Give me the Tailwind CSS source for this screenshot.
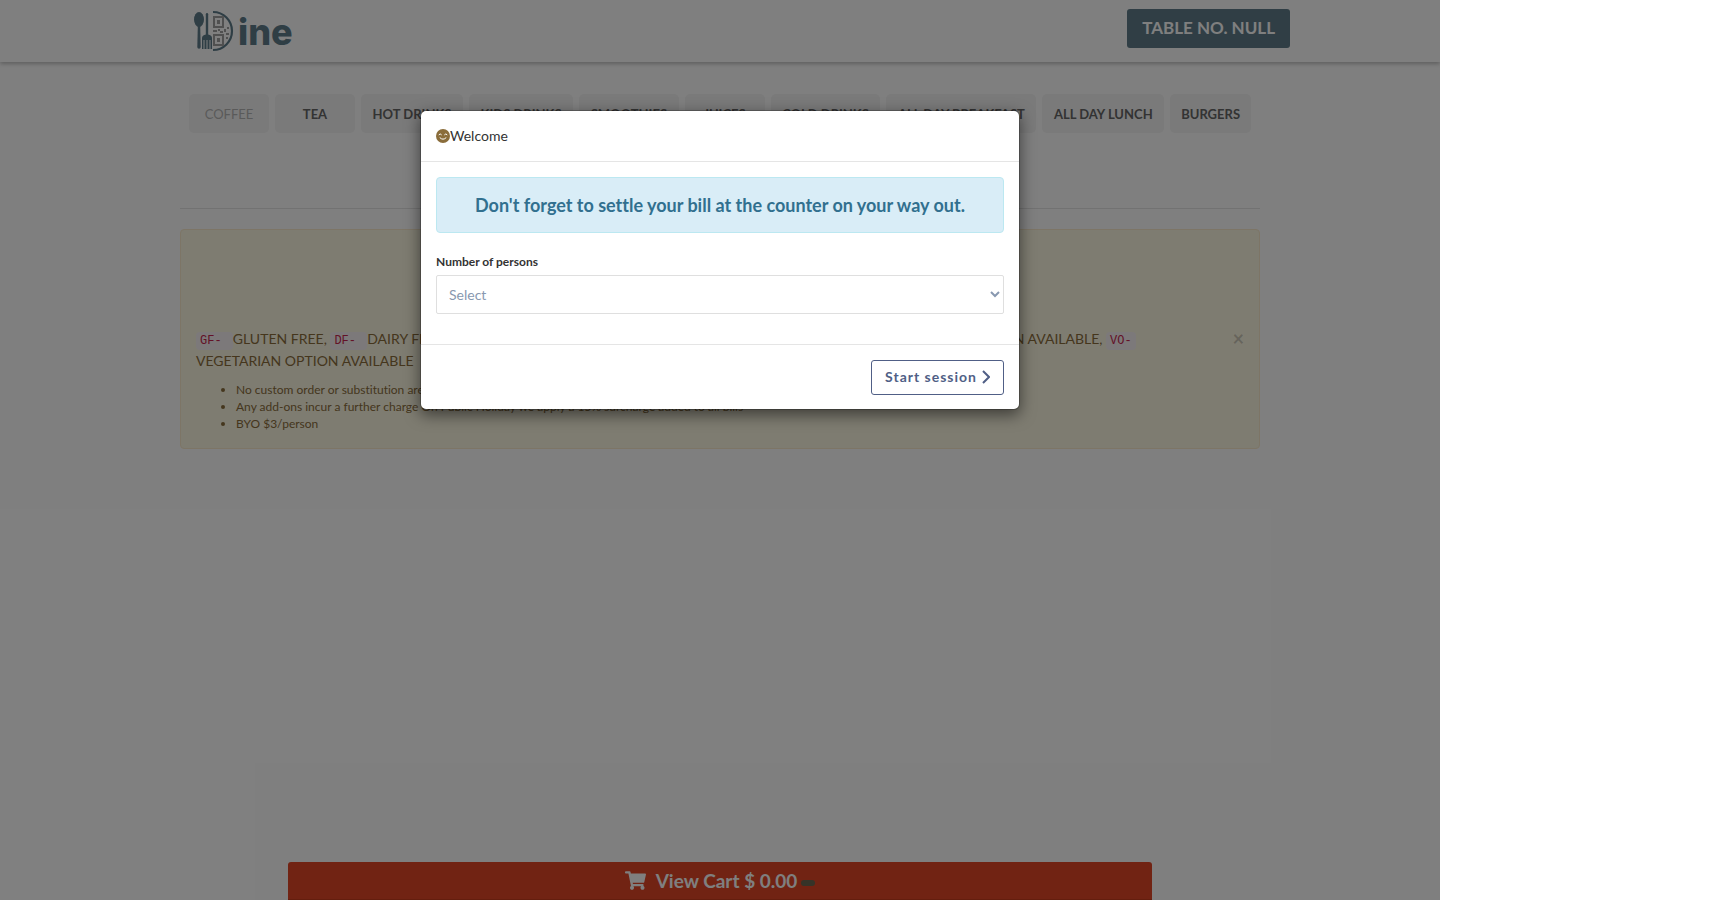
<!DOCTYPE html>
<html lang="en">
<head>
<meta charset="utf-8">
<title>Dine</title>
<script src="https://cdn.jsdelivr.net/npm/@tailwindcss/browser@4"></script>
</head>
<body class="bg-white font-['Lato',sans-serif] text-sm text-[#333] [font-variant-ligatures:none]">
<div class="relative flex min-h-screen w-full max-w-[1440px] flex-col overflow-hidden bg-white">

  <header class="h-[62px] w-full shadow-[0_2px_4px_rgba(0,0,0,0.25)]">
    <div class="mx-auto flex w-4/5 items-start justify-between pr-[6px] pl-[46px]">
      <a href="#" aria-label="Dine" class="mt-2">
        <svg width="106" height="46" viewBox="0 0 106 46" fill="#5f7d8b">
          <ellipse cx="9" cy="11.500" rx="5" ry="7.500"/>
          <path d="M7.800 18h2.400l.5 21a1.700 1.700 0 0 1-3.400 0z"/>
          <path d="M15.800 6.300a1.200 1.200 0 0 1 2.400 0V28h-2.400z"/>
          <path d="M12 41V30q0-3 4-3.500h2q4 .5 4 3.500v11h-1.500V32h-1v9h-2v-9h-1v9h-2v-9h-1v9z"/>
          <path d="M23 4A19 19 0 0 1 23 42" fill="none" stroke="#5f7d8b" stroke-width="2.200"/>
          <g fill="#a0a0a0">
            <path d="M23 8h11v12H23zm2 2v8h7v-8zM27 12h3v4h-3z" fill-rule="evenodd"/>
            <path d="M23 26h11v12H23zm2 2v8h7v-8zM27 30h3v4h-3z" fill-rule="evenodd"/>
            <path d="M23 22h4v2h-4zM28 21h2v2h-2zM30 23h3v2h-3zM34 21h2v3h-2zM37 19h2v2h-2zM36 25h3v2h-3zM36 29h2v2h-2z"/>
          </g>
          <text x="48" y="37" font-family="Inter" font-weight="800" font-size="36">ine</text>
        </svg>
      </a>
      <button class="mt-[9px] h-[39px] rounded-[3px] bg-[#607d8b] px-[15px] pb-[3px] text-[17px] leading-none font-bold text-white">TABLE NO. NULL</button>
    </div>
  </header>

  <main class="mx-auto w-3/4">
    <nav class="flex gap-[6px] pt-8 pr-[9px] pl-[9px] text-[13px] font-bold text-[#666]">
      <button class="h-[39px] min-w-20 rounded-[5px] bg-[#f4f4f4] px-[10px] pt-[2px] font-normal text-[#b4b4b4]">COFFEE</button>
      <button class="h-[39px] min-w-20 rounded-[5px] bg-[#f4f4f4] px-[10px] pt-[2px]">TEA</button>
      <button class="h-[39px] min-w-20 grow rounded-[5px] bg-[#f4f4f4] px-[10px] pt-[2px] whitespace-nowrap">HOT DRINKS</button>
      <button class="h-[39px] min-w-20 grow rounded-[5px] bg-[#f4f4f4] px-[10px] pt-[2px] whitespace-nowrap">KIDS DRINKS</button>
      <button class="h-[39px] min-w-20 grow rounded-[5px] bg-[#f4f4f4] px-[10px] pt-[2px]">SMOOTHIES</button>
      <button class="h-[39px] min-w-20 rounded-[5px] bg-[#f4f4f4] px-[10px] pt-[2px]">JUICES</button>
      <button class="h-[39px] min-w-20 grow rounded-[5px] bg-[#f4f4f4] px-[10px] pt-[2px] whitespace-nowrap">COLD DRINKS</button>
      <button class="h-[39px] min-w-20 grow rounded-[5px] bg-[#f4f4f4] px-[10px] pt-[2px] whitespace-nowrap">ALL DAY BREAKFAST</button>
      <button class="h-[39px] min-w-20 grow rounded-[5px] bg-[#f4f4f4] px-[10px] pt-[2px] whitespace-nowrap">ALL DAY LUNCH</button>
      <button class="h-[39px] min-w-20 rounded-[5px] bg-[#f4f4f4] px-[11px] pt-[2px]">BURGERS</button>
    </nav>
    <hr class="mt-[75px] mb-5 border-[#e5e5e5]">
    <section class="flex items-start gap-8 rounded border border-[#faebcc] bg-[#fcf8e3] px-[15px] pt-[98px] pb-4 text-[#8a6d3b]">
      <div class="flex-1">
        <p class="leading-[22px]"><code class="rounded bg-[#f9f2f4] px-1 py-[2px] font-['Liberation_Mono',monospace] text-xs text-[#c7254e]">GF- </code>GLUTEN FREE, <code class="rounded bg-[#f9f2f4] px-1 py-[2px] font-['Liberation_Mono',monospace] text-xs text-[#c7254e]">DF- </code>DAIRY FREE, <code class="rounded bg-[#f9f2f4] px-1 py-[2px] font-['Liberation_Mono',monospace] text-xs text-[#c7254e]">V- </code>VEGETARIAN, <code class="rounded bg-[#f9f2f4] px-1 py-[2px] font-['Liberation_Mono',monospace] text-xs text-[#c7254e]">GFO- </code>GLUTEN FREE OPTION AVAILABLE, <code class="rounded bg-[#f9f2f4] px-1 py-[2px] font-['Liberation_Mono',monospace] text-xs text-[#c7254e]">DFO- </code>DAIRY FREE OPTION AVAILABLE, <code class="rounded bg-[#f9f2f4] px-1 py-[2px] font-['Liberation_Mono',monospace] text-xs text-[#c7254e]">VO- </code>VEGETARIAN OPTION AVAILABLE</p>
        <ul class="mt-[9px] list-disc pl-10 text-xs leading-[17px]">
          <li>No custom order or substitution are allowed</li>
          <li>Any add-ons incur a further charge On Public Holiday we apply a 15% surcharge added to all bills</li>
          <li>BYO $3/person</li>
        </ul>
      </div>
      <button aria-label="Close" class="text-xl leading-5 font-bold text-black/20">×</button>
    </section>
  </main>

  <button class="mx-auto mt-auto flex h-[38px] w-3/5 items-center justify-center rounded-t-[3px] border-b border-[#c83c1c] bg-[#e24626] text-[19px] font-bold text-white">
    <svg width="21" height="19" viewBox="0 0 576 512" class="mr-[10px]" fill="currentColor"><path d="M528.120 301.319l47.273-208C578.806 78.301 567.391 64 551.990 64H159.208l-9.166-44.810C147.758 8.021 137.930 0 126.529 0H24C10.745 0 0 10.745 0 24v16c0 13.255 10.745 24 24 24h69.883l70.248 343.435C147.325 417.100 136 435.222 136 456c0 30.928 25.072 56 56 56s56-25.072 56-56c0-15.674-6.447-29.835-16.824-40h209.647C430.447 426.165 424 440.326 424 456c0 30.928 25.072 56 56 56s56-25.072 56-56c0-22.172-12.888-41.332-31.579-50.405l5.517-24.276c3.413-15.018-8.002-29.319-23.403-29.319H218.117l-6.545-32h293.145c11.206 0 20.920-7.754 23.403-18.681z"/></svg>
    <span>View Cart $ 0.00</span>
    <span class="mt-1 ml-1 h-[6px] w-[14px] rounded-full bg-[#6c6650]"></span>
  </button>

  <div class="absolute inset-0 bg-black/50"></div>

  <div role="dialog" aria-labelledby="title" class="absolute inset-x-0 top-[110px] mx-auto w-[600px] rounded-md border border-black/20 bg-white bg-clip-padding shadow-[0_5px_15px_rgba(0,0,0,0.5)]">
    <div class="flex h-[51px] items-center border-b border-[#e5e5e5] px-[15px]">
      <svg width="14" height="14" viewBox="0 0 14 14"><circle cx="7" cy="7" r="7" fill="#8a6d3b"/><path d="M3 5.600q1.200-1.600 2.400 0M8.600 5.600q1.200-1.600 2.400 0M4 8.800q3 3 6 0" fill="none" stroke="#fff" stroke-width="1" stroke-linecap="round"/></svg>
      <h4 id="title">Welcome</h4>
    </div>
    <div class="px-[15px] pt-[15px] pb-[30px]">
      <div class="flex h-14 items-center justify-center rounded border border-[#bce8f1] bg-[#d9edf7] text-lg font-bold text-[#31708f]">Don't forget to settle your bill at the counter on your way out.</div>
      <label for="persons" class="mt-5 mb-[5px] block text-xs leading-[17px] font-bold">Number of persons</label>
      <select id="persons" class="block h-[39px] w-full rounded-[2px] border border-[#dfdfdf] bg-white px-2 text-sm text-[#8898b0]"><option>Select</option></select>
    </div>
    <div class="flex justify-end border-t border-[#e5e5e5] px-[15px] pt-[15px] pb-[14px]">
      <button class="flex h-[35px] items-center gap-[5px] rounded-[3px] border border-[#505f86] px-[13px] pb-[2px] font-bold tracking-[1px] text-[#505f86]">Start session<svg width="8" height="14" viewBox="0 0 8 14" fill="none" stroke="currentColor" stroke-width="2"><path d="M1 1l6 6-6 6"/></svg></button>
    </div>
  </div>
</div>
</body>
</html>
